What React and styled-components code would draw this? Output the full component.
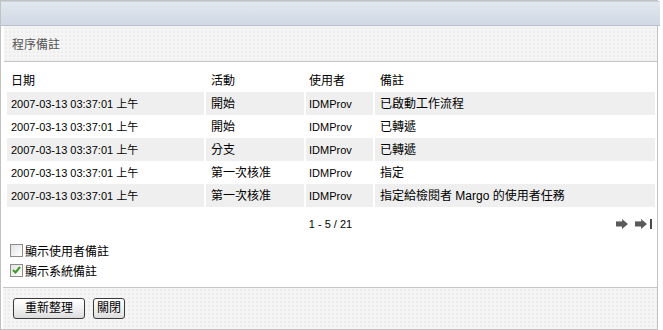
import React from "react";
import styled, { createGlobalStyle } from "styled-components";

const GlobalStyle = createGlobalStyle`
  body {
    margin: 0;
    background: #fff;
    font-family: "Liberation Sans", "Noto Sans CJK TC", sans-serif;
  }
`;

const Frame = styled.div`
  width: 656px;
  height: 328px;
  border: 1px solid #c2c2c2;
  display: flex;
  flex-direction: column;
  background: #fff;
`;

const TopBar = styled.div`
  height: 23px;
  margin-right: -3px;
  border-top: 1px solid #c9d1db;
  border-bottom: 1px solid #b7c1cd;
  background: linear-gradient(#e2e8ef, #d6dee8 60%, #d1dae5);
`;

const TitleBar = styled.div`
  height: 35px;
  margin-left: 3px;
  display: flex;
  align-items: center;
  padding-left: 8px;
  border-bottom: 1px solid #c4c4c4;
  background-color: #f5f5f5;
  background-image: radial-gradient(#ededed 1px, transparent 1px);
  background-size: 4px 4px;
  color: #555;
  font-size: 12px;
`;

const Content = styled.div`
  padding: 7px 2px 0 5px;
  flex: 1;
  display: flex;
  flex-direction: column;
`;

const Table = styled.table`
  width: 652px;
  border-collapse: separate;
  border-spacing: 2px 0;
  margin-left: -1px;
  table-layout: fixed;
`;

const Th = styled.th`
  height: 23px;
  line-height: 14px;
  text-align: left;
  font-weight: normal;
  font-size: 12px;
  color: #000;
  padding: 0 0 0 ${(p) => p.$pad}px;
  vertical-align: middle;
`;

const Row = styled.tr`
  background: ${(p) => (p.$alt ? "#efefef" : "#fff")};
`;

const Td = styled.td`
  height: 23px;
  line-height: 14px;
  padding: 0 0 0 ${(p) => p.$pad}px;
  font-size: ${(p) => (p.$small ? 11 : 12)}px;
  color: #000;
  white-space: nowrap;
  background: inherit;
`;

const Pager = styled.div`
  height: 33px;
  display: grid;
  grid-template-columns: 1fr auto 1fr;
  align-items: center;
  width: 649px;
  font-size: 11px;
  color: #000;
`;

const PagerText = styled.span`
  grid-column: 2;
`;

const PagerIcons = styled.div`
  grid-column: 3;
  justify-self: end;
  display: flex;
  gap: 7px;
  padding-right: 3px;
  align-items: center;
`;

const Options = styled.div`
  display: flex;
  flex-direction: column;
  padding-left: 4px;
`;

const Option = styled.label`
  height: 20px;
  display: flex;
  align-items: center;
  gap: 2px;
  font-size: 12px;
  color: #000;
`;

const Box = styled.span`
  width: 11px;
  height: 11px;
  border: 1px solid #8c8c8c;
  background: linear-gradient(135deg, #e4e4e4, #fff);
  display: flex;
  align-items: center;
  justify-content: center;
`;

const Footer = styled.div`
  height: 42px;
  margin-left: 2px;
  border-top: 1px solid #c4c4c4;
  background-color: #f5f5f5;
  background-image: radial-gradient(#ececec 1px, transparent 1px);
  background-size: 4px 4px;
  display: flex;
  gap: 8px;
  padding: 10px 0 0 10px;
  box-sizing: border-box;
`;

const Button = styled.button`
  height: 21px;
  padding: 0 ${(p) => p.$pad}px;
  border: 1px solid #3a3a3a;
  border-radius: 3px;
  background: linear-gradient(#ffffff, #f0f0f0 55%, #dcdcdc);
  font-family: "Liberation Sans", "Noto Sans CJK TC", sans-serif;
  font-size: 12px;
  color: #000;
  line-height: 19px;
`;

const Arrow = ({ end }) => (
  <svg width={end ? 17 : 12} height="10" viewBox={end ? "0 0 17 10" : "0 0 12 10"}>
    <path d="M0 2.5 H6 V0 L12 5 L6 10 V7.5 H0 Z" fill="#5a5a5a" />
    <path d="M0 2.5 H6 V0 L8.4 2 H0 Z" fill="#8a8a8a" />
    {end && <rect x="15" y="0" width="2" height="10" fill="#4a4a4a" />}
  </svg>
);

const rows = [
  ["開始", "已啟動工作流程"],
  ["開始", "已轉遞"],
  ["分支", "已轉遞"],
  ["第一次核准", "指定"],
  ["第一次核准", "指定給檢閱者 Margo 的使用者任務"],
];

export default function App() {
  return (
    <>
      <GlobalStyle />
      <Frame>
        <TopBar />
        <TitleBar>程序備註</TitleBar>
        <Content>
          <Table>
            <colgroup>
              <col style={{ width: 197 }} />
              <col style={{ width: 98 }} />
              <col style={{ width: 67 }} />
              <col />
            </colgroup>
            <thead>
              <tr>
                <Th $pad={4}>日期</Th>
                <Th $pad={5}>活動</Th>
                <Th $pad={3}>使用者</Th>
                <Th $pad={5}>備註</Th>
              </tr>
            </thead>
            <tbody>
              {rows.map(([act, note], i) => (
                <Row key={i} $alt={i % 2 === 0}>
                  <Td $pad={4} $small>2007-03-13 03:37:01 上午</Td>
                  <Td $pad={5}>{act}</Td>
                  <Td $pad={3} $small>IDMProv</Td>
                  <Td $pad={5}>{note}</Td>
                </Row>
              ))}
            </tbody>
          </Table>
          <Pager>
            <PagerText>1 - 5 / 21</PagerText>
            <PagerIcons>
              <Arrow />
              <Arrow end />
            </PagerIcons>
          </Pager>
          <Options>
            <Option>
              <Box />
              顯示使用者備註
            </Option>
            <Option>
              <Box>
                <svg width="9" height="8" viewBox="0 0 9 8">
                  <path d="M1 4 L3.5 6.5 L8 1" stroke="#3d9a22" strokeWidth="2" fill="none" />
                </svg>
              </Box>
              顯示系統備註
            </Option>
          </Options>
        </Content>
        <Footer>
          <Button $pad={11}>重新整理</Button>
          <Button $pad={3}>關閉</Button>
        </Footer>
      </Frame>
    </>
  );
}
